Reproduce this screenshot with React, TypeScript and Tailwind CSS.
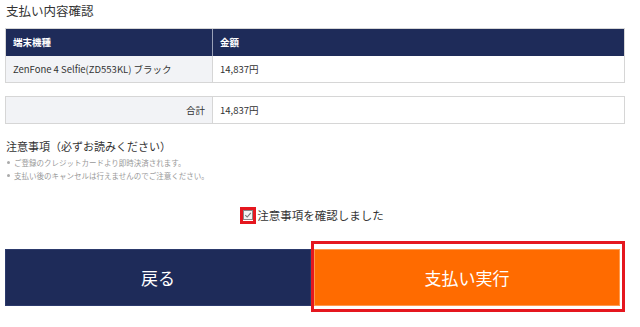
import React from "react";

const font = { fontFamily: '"Noto Sans CJK JP", "Noto Sans", sans-serif' };

function Cell({ children, className = "" }: { children: React.ReactNode; className?: string }) {
  return <div className={`flex items-center px-[7px] ${className}`}>{children}</div>;
}

export default function App() {
  const notes = [
    "ご登録のクレジットカードより即時決済されます。",
    "支払い後のキャンセルは行えませんのでご注意ください。",
  ];

  return (
    <div className="w-[640px] h-[327px] bg-white overflow-hidden text-[#333]" style={font}>
      <div className="pl-[5px] w-[625px]">
        <h1 className="pl-[1px] pt-[2px] h-[28px] text-[12.5px] leading-[18px] font-normal">支払い内容確認</h1>

        {/* 明細 */}
        <div className="border border-[#d6d6d6]">
          <div className="flex h-[27px] bg-[#1e2b59] text-white text-[9.5px] font-bold">
            <Cell className="w-[207px] border-r border-[#9aa1b8]">端末機種</Cell>
            <Cell className="flex-1">金額</Cell>
          </div>
          <div className="flex h-[26px] text-[9.5px]">
            <Cell className="w-[207px] bg-[#f2f3f6] border-r border-[#d6d6d6]">ZenFone 4 Selfie(ZD553KL) ブラック</Cell>
            <Cell className="flex-1">14,837円</Cell>
          </div>
        </div>

        <div className="mt-[13px] flex h-[28px] border border-[#d6d6d6] text-[9.5px]">
          <Cell className="w-[207px] bg-[#f2f3f6] border-r border-[#d6d6d6] justify-end">合計</Cell>
          <Cell className="flex-1">14,837円</Cell>
        </div>

        {/* 注意事項 */}
        <h2 className="mt-[14px] pl-[1px] text-[11px] leading-[16px] font-normal">注意事項（必ずお読みください）</h2>
        <ul className="mt-[2px] text-[7.5px] leading-[13px] text-[#999]">
          {notes.map((n) => (
            <li key={n} className="flex items-center gap-[4px] pl-[2px]">
              <span className="w-[3px] h-[3px] rounded-full bg-[#aaa]" />
              {n}
            </li>
          ))}
        </ul>

        <div className="mt-[23px] flex justify-center items-center h-[20px] pr-[6px]">
          <label className="flex items-center text-[11.5px] leading-[16px]">
            <span className="relative w-[16px] h-[17px] border-[3px] border-[#e5171f] flex items-center justify-center">
              <span className="w-[10px] h-[10px] border border-[#888] bg-[#f4f4f4] flex items-center justify-center">
                <svg width="8" height="8" viewBox="0 0 8 8">
                  <path d="M1.2 4.2 L3.2 6 L6.8 1.8" stroke="#777" strokeWidth="1.1" fill="none" />
                </svg>
              </span>
            </span>
            <span className="ml-[1px]">注意事項を確認しました</span>
          </label>
        </div>

        {/* ボタン */}
        <div className="mt-[16px] flex">
          <div className="mt-[8px] w-[306px] h-[57px] bg-[#1e2b59] border border-[#2c3a6c] text-white text-[17px] flex items-center justify-center">
            戻る
          </div>
          <div className="w-[314px] h-[71px] border-[3px] border-[#e5171f] pt-[5px]">
            <div className="w-[306px] h-[57px] bg-[#ff6b00] border border-[#ff9a4d] text-white text-[17px] flex items-center justify-center">
              支払い実行
            </div>
          </div>
        </div>
      </div>
    </div>
  );
}
